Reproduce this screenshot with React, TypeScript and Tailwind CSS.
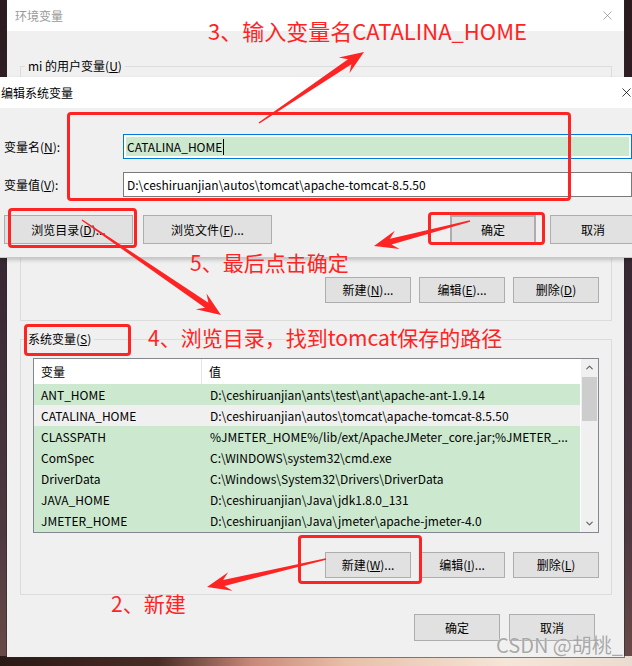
import React from "react";
import { X, ChevronUp, ChevronDown } from "lucide-react";

function arrowPoints(x1: number, y1: number, x2: number, y2: number, w0 = 1.5, w1 = 6, L = 24, W = 19) {
  const dx = x2 - x1;
  const dy = y2 - y1;
  const len = Math.hypot(dx, dy);
  const ux = dx / len;
  const uy = dy / len;
  const nx = -uy;
  const ny = ux;
  const p = (d: number, o: number) => [x1 + ux * d + nx * o, y1 + uy * d + ny * o];
  const pts = [
    p(0, w0 / 2),
    p(len - L * 0.72, w1 / 2),
    p(len - L, W / 2),
    [x2, y2],
    p(len - L, -W / 2),
    p(len - L * 0.72, -w1 / 2),
    p(0, -w0 / 2),
  ];
  return pts.map((q) => q.map((v) => v.toFixed(1)).join(",")).join(" ");
}

function Btn({ children, className = "" }: { children: React.ReactNode; className?: string }) {
  return (
    <div
      className={`flex items-center justify-center bg-[#e1e1e1] border border-[#adadad] text-[12px] text-black shrink-0 ${className}`}
    >
      {children}
    </div>
  );
}

const rows: { name: string; value: string; sel?: boolean }[] = [
  { name: "ANT_HOME", value: "D:\\ceshiruanjian\\ants\\test\\ant\\apache-ant-1.9.14" },
  { name: "CATALINA_HOME", value: "D:\\ceshiruanjian\\autos\\tomcat\\apache-tomcat-8.5.50", sel: true },
  { name: "CLASSPATH", value: "%JMETER_HOME%/lib/ext/ApacheJMeter_core.jar;%JMETER_..." },
  { name: "ComSpec", value: "C:\\WINDOWS\\system32\\cmd.exe" },
  { name: "DriverData", value: "C:\\Windows\\System32\\Drivers\\DriverData" },
  { name: "JAVA_HOME", value: "D:\\ceshiruanjian\\Java\\jdk1.8.0_131" },
  { name: "JMETER_HOME", value: "D:\\ceshiruanjian\\Java\\jmeter\\apache-jmeter-4.0" },
];

export default function App() {
  return (
    <div className="relative w-[632px] h-[666px] overflow-hidden font-['Noto_Sans_CJK_SC','Noto_Sans',sans-serif] [background:linear-gradient(90deg,#2a1a16_0%,#4a2c26_25%,#c88a78_40%,#e8c0a8_55%,#f4e6d8_80%,#eadcd0_100%)_bottom/100%_10px_no-repeat,linear-gradient(180deg,#2b1b1e_0%,#3a2a36_45%,#4e3840_80%,#6a4c48_100%)]">
      {/* Outer dialog: 环境变量 */}
      <div className="absolute left-[7px] top-0 w-[617px] h-[657px] bg-[#f0f0f0] flex flex-col shadow-[0_0_0_1px_rgba(40,40,40,0.55)]">
        <div className="h-[31px] bg-white flex items-center justify-between pl-[8px] pr-[9px] shrink-0">
          <span className="text-[12px] text-[#9a9a9a]">环境变量</span>
          <X className="w-[15px] h-[15px] text-[#7a7a7a]" strokeWidth={1} />
        </div>
        <div className="flex flex-col pl-[13px] pr-[12px]">
          <fieldset className="mt-[27px] border border-[#dcdcdc] flex flex-col">
            <legend className="ml-[4px] px-[3px] text-[12px] leading-[16px] text-black">
              mi 的用户变量(<u>U</u>)
            </legend>
            <div className="flex justify-end gap-[8px] pr-[12px] mt-[203px] mb-[17px]">
              <Btn className="w-[86px] h-[26px]">
                新建(<u>N</u>)...
              </Btn>
              <Btn className="w-[86px] h-[26px]">
                编辑(<u>E</u>)...
              </Btn>
              <Btn className="w-[86px] h-[26px]">
                删除(<u>D</u>)
              </Btn>
            </div>
          </fieldset>

          <fieldset className="mt-[10px] border border-[#dcdcdc] flex flex-col">
            <legend className="ml-[4px] px-[3px] text-[12px] leading-[16px] text-black">
              系统变量(<u>S</u>)
            </legend>
            <div className="mx-[12px] mt-[11px] h-[175px] border border-[#828790] bg-white flex">
              <div className="flex-1 flex flex-col min-w-0">
                <div className="h-[25px] flex items-stretch bg-white shrink-0 text-[12px] text-black">
                  <div className="w-[168px] pl-[7px] flex items-center border-r border-[#e5e5e5]">变量</div>
                  <div className="flex-1 pl-[7px] flex items-center">值</div>
                </div>
                <div className="flex-1 bg-[#cce8cf] mr-[1px] flex flex-col">
                  {rows.map((r) => (
                    <div
                      key={r.name}
                      className={`h-[21px] flex items-center text-[12px] text-black whitespace-nowrap ${
                        r.sel ? "bg-[#f0f0f0]" : ""
                      }`}
                    >
                      <div className="w-[169px] pl-[7px] overflow-hidden">{r.name}</div>
                      <div className="flex-1 pl-[7px] overflow-hidden">{r.value}</div>
                    </div>
                  ))}
                </div>
              </div>
              <div className="w-[17px] bg-[#f0f0f0] flex flex-col items-center shrink-0">
                <div className="h-[17px] flex items-center justify-center">
                  <ChevronUp className="w-[11px] h-[11px] text-[#606060]" strokeWidth={2.5} />
                </div>
                <div className="w-[15px] h-[44px] mt-[1px] bg-[#cdcdcd]" />
                <div className="flex-1" />
                <div className="h-[17px] flex items-center justify-center">
                  <ChevronDown className="w-[11px] h-[11px] text-[#606060]" strokeWidth={2.5} />
                </div>
              </div>
            </div>
            <div className="flex justify-end gap-[8px] pr-[12px] mt-[19px] mb-[16px]">
              <Btn className="w-[86px] h-[26px]">
                新建(<u>W</u>)...
              </Btn>
              <Btn className="w-[86px] h-[26px]">
                编辑(<u>I</u>)...
              </Btn>
              <Btn className="w-[86px] h-[26px]">
                删除(<u>L</u>)
              </Btn>
            </div>
          </fieldset>

          <div className="flex justify-end gap-[9px] pr-[17px] mt-[19px]">
            <Btn className="w-[86px] h-[27px]">确定</Btn>
            <Btn className="w-[86px] h-[27px]">取消</Btn>
          </div>
        </div>
      </div>

      {/* Inner dialog: 编辑系统变量 */}
      <div className="absolute left-0 top-[77px] w-[640px] h-[181px] bg-[#f0f0f0] flex flex-col border-b border-[#c8c8c8] shadow-[0_2px_4px_rgba(0,0,0,0.2)]">
        <div className="h-[31px] bg-white flex items-center justify-between pl-[1px] pr-[6px] shrink-0">
          <span className="text-[12px] text-black">编辑系统变量</span>
          <X className="w-[15px] h-[15px] text-black" strokeWidth={1.2} />
        </div>
        <div className="flex flex-col pl-[4px]">
          <div className="mt-[26px] h-[25px] flex items-center">
            <div className="w-[119px] text-[12px] text-black">
              变量名(<u>N</u>):
            </div>
            <div className="w-[509px] h-[25px] border border-[#0078d7] bg-white p-[2px]">
              <div className="h-full bg-[#cce8cf] flex items-center pl-[1px] text-[12px] text-black">
                CATALINA_HOME
                <span className="inline-block w-[1px] h-[16px] bg-black ml-[1px]" />
              </div>
            </div>
          </div>
          <div className="mt-[13px] h-[25px] flex items-center">
            <div className="w-[119px] text-[12px] text-black">
              变量值(<u>V</u>):
            </div>
            <div className="w-[509px] h-[25px] border border-[#7a7a7a] bg-white flex items-center pl-[3px] text-[12px] text-black">
              D:\ceshiruanjian\autos\tomcat\apache-tomcat-8.5.50
            </div>
          </div>
          <div className="mt-[18px] flex items-center">
            <Btn className="w-[129px] h-[29px]">
              浏览目录(<u>D</u>)...
            </Btn>
            <Btn className="w-[129px] h-[29px] ml-[10px]">
              浏览文件(<u>F</u>)...
            </Btn>
            <Btn className="w-[86px] h-[29px] ml-[178px] border-2 border-[#0078d7]">确定</Btn>
            <Btn className="w-[86px] h-[29px] ml-[14px]">取消</Btn>
          </div>
        </div>
      </div>

      {/* Annotations: red boxes */}
      <div className="absolute left-[67px] top-[112px] w-[504px] h-[89px] border-[3px] border-[#ff2424] rounded-[4px]" />
      <div className="absolute left-[8px] top-[208px] w-[129px] h-[40px] border-[3px] border-[#ff2424] rounded-[4px]" />
      <div className="absolute left-[428px] top-[212px] w-[117px] h-[33px] border-[3px] border-[#ff2424] rounded-[4px]" />
      <div className="absolute left-[24px] top-[324px] w-[107px] h-[32px] border-[3px] border-[#ff2424] rounded-[4px]" />
      <div className="absolute left-[298px] top-[535px] w-[124px] h-[49px] border-[3px] border-[#ff2424] rounded-[4px]" />

      {/* Annotations: arrows */}
      <svg className="absolute inset-0 pointer-events-none" width="632" height="666" viewBox="0 0 632 666">
        <polygon points={arrowPoints(259, 123, 364, 52)} fill="#ff2424" />
        <polygon points={arrowPoints(82, 220, 221, 315)} fill="#ff2424" />
        <polygon points={arrowPoints(470, 221, 374, 246)} fill="#ff2424" />
        <polygon points={arrowPoints(326, 559, 207, 587)} fill="#ff2424" />
      </svg>

      {/* Annotations: text */}
      <div className="absolute left-[208px] top-[17px] text-[22px] leading-[26px] text-[#ff2424] whitespace-nowrap">
        3、输入变量名CATALINA_HOME
      </div>
      <div className="absolute left-[190px] top-[249px] text-[21px] leading-[26px] text-[#ff2424] whitespace-nowrap">
        5、最后点击确定
      </div>
      <div className="absolute left-[148px] top-[324px] text-[21px] leading-[26px] text-[#ff2424] whitespace-nowrap">
        4、浏览目录，找到tomcat保存的路径
      </div>
      <div className="absolute left-[111px] top-[590px] text-[21px] leading-[26px] text-[#ff2424] whitespace-nowrap">
        2、新建
      </div>

      {/* Watermark */}
      <div className="absolute left-[496px] top-[633px] text-[20px] leading-[24px] text-[#a8a8a8] whitespace-nowrap [text-shadow:0_0_1px_rgba(255,255,255,0.9)]">
        CSDN @胡桃_
      </div>
    </div>
  );
}
